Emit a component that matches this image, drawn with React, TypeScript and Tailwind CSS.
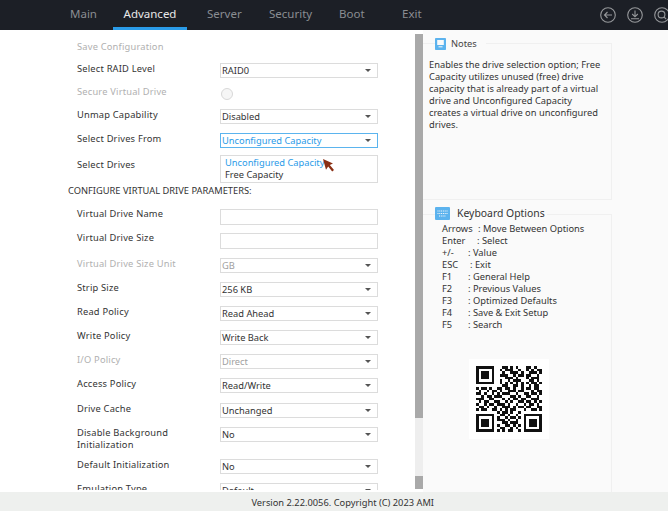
import type { ReactNode } from "react";

const tabs = ["Main", "Advanced", "Server", "Security", "Boot", "Exit"];
const tabStyles = [
  "w-[43px] pb-[2px] text-[#8a8d92]",
  "w-[74px] justify-center border-b-[3px] border-[#2a9be8] pt-[1px] text-[#e8e8e8]",
  "ml-[20px] w-[35px] pb-[2px] text-[#8a8d92]",
  "ml-[27px] w-[45px] pb-[2px] text-[#8a8d92]",
  "ml-[25px] w-[26px] pb-[2px] text-[#8a8d92]",
  "ml-[37px] w-[20px] pb-[2px] text-[#8a8d92]",
];

const keys = [
  ["Arrows", ": Move Between Options", "w-[36px]"],
  ["Enter", ": Select", "w-[35px]"],
  ["+/-", ": Value", "w-[26px]"],
  ["ESC", ": Exit", "w-[28px]"],
  ["F1", ": General Help", "w-[26px]"],
  ["F2", ": Previous Values", "w-[26px]"],
  ["F3", ": Optimized Defaults", "w-[26px]"],
  ["F4", ": Save & Exit Setup", "w-[26px]"],
  ["F5", ": Search", "w-[26px]"],
];

const qr = [
  "1111111000110101000110100",
  "1000001001011100100101011",
  "1011101000100111010011101",
  "1011101001110010110110010",
  "1011101000011101000101110",
  "1000001001001011100011010",
  "1111111001010101010101101",
  "0000000000110011010010110",
  "1011010011011010010110110",
  "0100101101001110110001011",
  "1101001010111001001101101",
  "0010110111000110100110010",
  "1110011000101011011001110",
  "0101100110010100110110101",
  "1001011011101001001011010",
  "0110100100111010110110011",
  "1011001101010110001001101",
  "0000000010110100100000000",
  "1111111001101001001111111",
  "1000001010010110101000001",
  "1011101011101001001011101",
  "1011101000110111001011101",
  "1011101010011010101011101",
  "1000001001100101001000001",
  "1111111010101100101111111",
];

const Caret = () => <span className="ml-auto mr-[6px] h-0 w-0 border-x-[3px] border-t-[3px] border-x-transparent border-t-[#555]" />;

const Select = ({ value, muted, active }: { value: string; muted?: boolean; active?: boolean }) => (
  <div className={`flex h-[15px] w-[158px] items-center border pl-[1px] ${active ? "border-[#5bb4ee] text-[#2a9be8]" : "border-[#dcdcdc]"} ${muted ? "text-[#a0a0a0]" : ""}`}>
    {value}
    <Caret />
  </div>
);

const Input = () => <div className="mt-[1px] h-[16px] w-[158px] border border-[#dcdcdc]" />;

const Row = ({ label, muted, className, labelClass, children }: { label: string; muted?: boolean; className?: string; labelClass?: string; children?: ReactNode }) => (
  <div className={`flex items-start ${className ?? "h-[24px]"}`}>
    <div className={`w-[143px] shrink-0 leading-[12px] tracking-[0.2px] ${labelClass ?? ""} ${muted ? "text-[#b0b0b0]" : "text-[#333]"}`}>{label}</div>
    <div>{children}</div>
  </div>
);

export default function App() {
  return (
    <div className="flex h-[511px] w-[668px] flex-col overflow-hidden bg-white font-['Noto_Sans',sans-serif] text-[9.3px] text-[#333]">
      <header className="flex h-[30px] shrink-0 items-center bg-[#1c1f26] pl-[70px]">
        {tabs.map((t, i) => (
          <div key={t} className={`flex h-full items-center text-[11.5px] ${tabStyles[i]}`}>
            {t}
          </div>
        ))}
        <div className="-mr-[2px] ml-auto flex gap-[11px] text-[#96989b]">
          <svg viewBox="0 0 16 16" className="h-[16px] w-[16px]" fill="none" stroke="currentColor" strokeWidth="1.1"><circle cx="8" cy="8" r="7.3" /><path d="M12 8H4.5M7.5 5 4.5 8l3 3" /></svg>
          <svg viewBox="0 0 16 16" className="h-[16px] w-[16px]" fill="none" stroke="currentColor" strokeWidth="1.1"><circle cx="8" cy="8" r="7.3" /><path d="M8 3.5V9.5M5.2 7 8 9.8l2.8-2.8M4 11.8h8" /></svg>
          <svg viewBox="0 0 16 16" className="h-[16px] w-[16px]" fill="none" stroke="currentColor" strokeWidth="1.1"><circle cx="8" cy="8" r="7.3" /><circle cx="7.5" cy="7.5" r="3.4" /><path d="m10 10 2.2 2.2" /></svg>
        </div>
      </header>

      <main className="flex min-h-0 flex-1">
        <div className="h-[460px] w-[415px] shrink-0 overflow-hidden pl-[68px] pt-[11px]">
          <div className="ml-[9px]">
            <Row label="Save Configuration" muted className="h-[22px]" />
            <Row label="Select RAID Level" className="h-[23px]"><Select value="RAID0" /></Row>
            <Row label="Secure Virtual Drive" muted className="h-[23px]"><span className="ml-[1px] mt-[2px] block h-[12px] w-[12px] rounded-full border border-[#d8d8d8] bg-[#f6f6f6]" /></Row>
            <Row label="Unmap Capability"><Select value="Disabled" /></Row>
            <Row label="Select Drives From" className="h-[21px]"><Select value="Unconfigured Capacity" active /></Row>
            <Row label="Select Drives" className="h-[29px]" labelClass="mt-[5px]">
              <div className="relative mt-[1px] h-[28px] w-[158px] border border-[#dcdcdc] pl-[4px] pt-[1px] leading-[12px]">
                <div className="text-[#2a9be8]">Unconfigured Capacity</div>
                <div>Free Capacity</div>
                <svg viewBox="0 0 11 13" className="absolute left-[102px] top-[3px] h-[13px] w-[11px]"><path d="M0 0l10 4.5-3.2 1.4L11 11l-1.8 1.6-4-5.2L3 10.8z" fill="#8a2f14" /></svg>
              </div>
            </Row>
          </div>
          <div className="h-[25px] pt-[1px] text-[#333]">CONFIGURE VIRTUAL DRIVE PARAMETERS:</div>
          <div className="ml-[9px]">
            <Row label="Virtual Drive Name"><Input /></Row>
            <Row label="Virtual Drive Size" className="h-[26px]"><Input /></Row>
            <Row label="Virtual Drive Size Unit" muted><Select value="GB" muted /></Row>
            <Row label="Strip Size"><Select value="256 KB" /></Row>
            <Row label="Read Policy"><Select value="Read Ahead" /></Row>
            <Row label="Write Policy"><Select value="Write Back" /></Row>
            <Row label="I/O Policy" muted><Select value="Direct" muted /></Row>
            <Row label="Access Policy" className="h-[25px]"><Select value="Read/Write" /></Row>
            <Row label="Drive Cache"><Select value="Unchanged" /></Row>
            <Row label="Disable Background Initialization" className="h-[32px]" labelClass="pr-[40px]"><Select value="No" /></Row>
            <Row label="Default Initialization"><Select value="No" /></Row>
            <Row label="Emulation Type"><Select value="Default" /></Row>
          </div>
        </div>

        <div className="flex h-[459px] w-[8px] shrink-0 flex-col">
          <div className="mt-[4px] h-[384px] bg-[#a9a9a9]" />
          <div className="h-[58px] bg-[#eeeeee]" />
          <div className="h-[13px] bg-[#a9a9a9]" />
        </div>

        <aside className="w-[245px] shrink-0 bg-[#fafafa] pt-[13px]">
          <section className="relative h-[157px] w-[189px] border-y border-r border-[#f0f0f0] pl-[6px] pt-[15px] leading-[12px]">
            <div className="absolute left-[12px] top-[-6px] flex items-center gap-[5px] bg-[#fafafa] pr-[9px] text-[#444]">
              <svg viewBox="0 0 11 12" className="h-[12px] w-[11px]"><rect width="11" height="12" rx="0.8" fill="#5cb3ee" /><rect x="2.2" y="2" width="6.6" height="5" fill="#fafafa" /><path d="M3.5 8.8h4" stroke="#fafafa" /></svg>
              Notes
            </div>
            <p className="w-[172px]">Enables the drive selection option; Free Capacity utilizes unused (free) drive capacity that is already part of a virtual drive and Unconfigured Capacity creates a virtual drive on unconfigured drives.</p>
          </section>
          <section className="relative mt-[14px] h-[278px] w-[189px] border-r border-t border-[#f0f0f0] pl-[19px] pt-[8px] leading-[12px]">
            <div className="absolute left-[12px] top-[-9px] flex items-center gap-[7px] bg-[#fafafa] pr-[2px] text-[10.4px] text-[#333]">
              <svg viewBox="0 0 15 14" className="h-[14px] w-[15px]"><rect y="1" width="15" height="13" rx="1" fill="#5cb3ee" /><path d="M2.5 5h10M2.5 7.5h10M4 10h7" stroke="#fafafa" strokeDasharray="1 0.8" /></svg>
              Keyboard Options
            </div>
            {keys.map(([k, v, w]) => (
              <div key={k} className="flex"><span className={w}>{k}</span><span>{v}</span></div>
            ))}
            <div className="ml-[27px] mt-[28px] flex h-[80px] w-[80px] items-center justify-center bg-white">
              <svg viewBox="0 0 25 25" className="h-[66px] w-[66px]" shapeRendering="crispEdges">
                {qr.flatMap((row, y) =>
                  [...row].map((c, x) => (c === "1" ? <rect key={`${x}-${y}`} x={x} y={y} width="1" height="1" fill="#111" /> : null))
                )}
              </svg>
            </div>
          </section>
        </aside>
      </main>

      <footer className="flex h-[19px] shrink-0 items-center justify-end bg-[#eef0ee] pr-[234px] pt-[3px] text-[#333]">Version 2.22.0056. Copyright (C) 2023 AMI</footer>
    </div>
  );
}
